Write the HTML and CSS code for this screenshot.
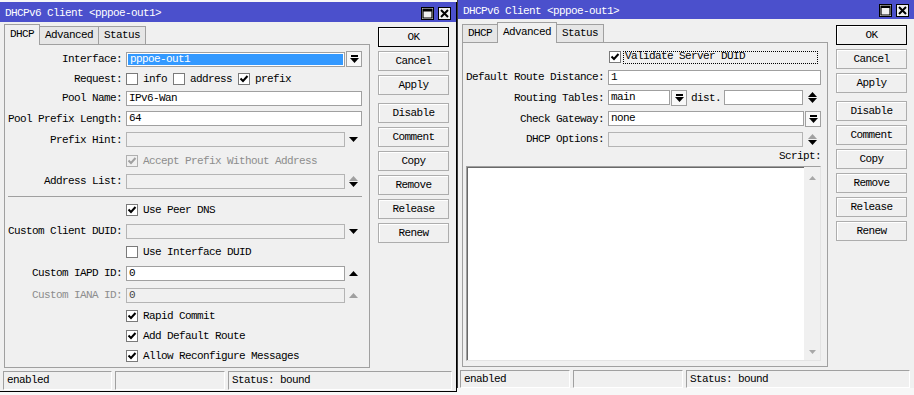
FILE: index.html
```html
<!doctype html>
<html lang="en">

<head>
    <meta charset="utf-8">
    <title>DHCPv6 Client &lt;pppoe-out1&gt;</title>
    <link rel="stylesheet" href="styles.css">
</head>

<body>
    <div class="desk">
        <!-- DHCP tab window -->
        <section class="win win-left">
            <header class="titlebar">
                <span class="title">DHCPv6 Client &lt;pppoe-out1&gt;</span>
                <span class="tb-btns">
                    <span class="tb-btn"><svg width="11" height="11" viewBox="0 0 11 11"><path d="M1 1h9v9H1z M1 1h9v2H1z" fill="none" stroke="#000" stroke-width="1.2"/><rect x="1" y="1" width="9" height="2"/></svg></span>
                    <span class="tb-btn"><svg width="11" height="11" viewBox="0 0 11 11"><path d="M2 2l7 7M9 2l-7 7" stroke="#000" stroke-width="2"/></svg></span>
                </span>
            </header>
            <div class="win-body">
                <div class="main">
                    <div class="tabs">
                        <span class="tab active">DHCP</span>
                        <span class="tab">Advanced</span>
                        <span class="tab">Status</span>
                    </div>
                    <div class="panel panel-left">
                        <div class="row h20">
                            <span class="lbl">Interface:</span>
                            <div class="ctl"><span class="field sel"><span>pppoe-out1</span></span><span class="ddbtn"><svg width="9" height="8" viewBox="0 0 9 8"><rect x="1" y="0" width="7" height="2"/><path d="M0 3h9l-4.5 5z"/></svg></span></div>
                        </div>
                        <div class="row h19">
                            <span class="lbl">Request:</span>
                            <div class="ctl">
                                <span class="cb"></span><span>info</span>
                                <span class="cb ml6"></span><span>address</span>
                                <span class="cb ml6"><svg width="10" height="10" viewBox="0 0 10 10"><path d="M1.5 4.5l2.5 2.5 4.5-5" fill="none" stroke="#000" stroke-width="2"/></svg></span><span>prefix</span>
                            </div>
                        </div>
                        <div class="row h20">
                            <span class="lbl">Pool Name:</span>
                            <div class="ctl"><span class="field">IPv6-Wan</span></div>
                        </div>
                        <div class="row h21">
                            <span class="lbl">Pool Prefix Length:</span>
                            <div class="ctl"><span class="field">64</span></div>
                        </div>
                        <div class="row h21">
                            <span class="lbl">Prefix Hint:</span>
                            <div class="ctl"><span class="field dis"></span><span class="arrow"><svg width="9" height="5" viewBox="0 0 9 5"><path d="M0 0h9L4.5 5z"/></svg></span></div>
                        </div>
                        <div class="row h21">
                            <span class="lbl"></span>
                            <div class="ctl"><span class="cb dis"><svg width="10" height="10" viewBox="0 0 10 10"><path d="M1.5 4.5l2.5 2.5 4.5-5" fill="none" stroke="#a0a0a0" stroke-width="2"/></svg></span><span class="gray">Accept Prefix Without Address</span></div>
                        </div>
                        <div class="row h20">
                            <span class="lbl">Address List:</span>
                            <div class="ctl"><span class="field dis"></span><span class="arrow updown"><svg width="9" height="5" viewBox="0 0 9 5"><path d="M0 5h9L4.5 0z" fill="#a0a0a0"/></svg><svg width="9" height="5" viewBox="0 0 9 5"><path d="M0 0h9L4.5 5z"/></svg></span></div>
                        </div>
                        <div class="sep"></div>
                        <div class="row h20">
                            <span class="lbl"></span>
                            <div class="ctl"><span class="cb"><svg width="10" height="10" viewBox="0 0 10 10"><path d="M1.5 4.5l2.5 2.5 4.5-5" fill="none" stroke="#000" stroke-width="2"/></svg></span><span>Use Peer DNS</span></div>
                        </div>
                        <div class="row h22">
                            <span class="lbl">Custom Client DUID:</span>
                            <div class="ctl"><span class="field dis"></span><span class="arrow"><svg width="9" height="5" viewBox="0 0 9 5"><path d="M0 0h9L4.5 5z"/></svg></span></div>
                        </div>
                        <div class="row h20">
                            <span class="lbl"></span>
                            <div class="ctl"><span class="cb"></span><span>Use Interface DUID</span></div>
                        </div>
                        <div class="row h22">
                            <span class="lbl">Custom IAPD ID:</span>
                            <div class="ctl"><span class="field">0</span><span class="arrow"><svg width="9" height="5" viewBox="0 0 9 5"><path d="M0 5h9L4.5 0z"/></svg></span></div>
                        </div>
                        <div class="row h22">
                            <span class="lbl gray">Custom IANA ID:</span>
                            <div class="ctl"><span class="field dis">0</span><span class="arrow"><svg width="9" height="5" viewBox="0 0 9 5"><path d="M0 5h9L4.5 0z" fill="#a0a0a0"/></svg></span></div>
                        </div>
                        <div class="row h20">
                            <span class="lbl"></span>
                            <div class="ctl"><span class="cb"><svg width="10" height="10" viewBox="0 0 10 10"><path d="M1.5 4.5l2.5 2.5 4.5-5" fill="none" stroke="#000" stroke-width="2"/></svg></span><span>Rapid Commit</span></div>
                        </div>
                        <div class="row h20">
                            <span class="lbl"></span>
                            <div class="ctl"><span class="cb"><svg width="10" height="10" viewBox="0 0 10 10"><path d="M1.5 4.5l2.5 2.5 4.5-5" fill="none" stroke="#000" stroke-width="2"/></svg></span><span>Add Default Route</span></div>
                        </div>
                        <div class="row h20">
                            <span class="lbl"></span>
                            <div class="ctl"><span class="cb"><svg width="10" height="10" viewBox="0 0 10 10"><path d="M1.5 4.5l2.5 2.5 4.5-5" fill="none" stroke="#000" stroke-width="2"/></svg></span><span>Allow Reconfigure Messages</span></div>
                        </div>
                    </div>
                </div>
                <div class="buttons">
                    <span class="btn default">OK</span>
                    <span class="btn">Cancel</span>
                    <span class="btn">Apply</span>
                    <span class="btn gap">Disable</span>
                    <span class="btn">Comment</span>
                    <span class="btn">Copy</span>
                    <span class="btn">Remove</span>
                    <span class="btn">Release</span>
                    <span class="btn">Renew</span>
                </div>
            </div>
            <div class="statusbar">
                <span class="sb-cell">enabled</span>
                <span class="sb-cell"></span>
                <span class="sb-cell">Status: bound</span>
            </div>
        </section>

        <!-- Advanced tab window -->
        <section class="win win-right">
            <header class="titlebar">
                <span class="title">DHCPv6 Client &lt;pppoe-out1&gt;</span>
                <span class="tb-btns">
                    <span class="tb-btn"><svg width="11" height="11" viewBox="0 0 11 11"><path d="M1 1h9v9H1z" fill="none" stroke="#000" stroke-width="1.2"/><rect x="1" y="1" width="9" height="2"/></svg></span>
                    <span class="tb-btn"><svg width="11" height="11" viewBox="0 0 11 11"><path d="M2 2l7 7M9 2l-7 7" stroke="#000" stroke-width="2"/></svg></span>
                </span>
            </header>
            <div class="win-body">
                <div class="main">
                    <div class="tabs">
                        <span class="tab">DHCP</span>
                        <span class="tab active">Advanced</span>
                        <span class="tab">Status</span>
                    </div>
                    <div class="panel panel-right">
                        <div class="row h20">
                            <span class="lbl"></span>
                            <div class="ctl"><span class="cb ml1"><svg width="10" height="10" viewBox="0 0 10 10"><path d="M1.5 4.5l2.5 2.5 4.5-5" fill="none" stroke="#000" stroke-width="2"/></svg></span><span class="focus">Validate Server DUID</span></div>
                        </div>
                        <div class="row h20">
                            <span class="lbl">Default Route Distance:</span>
                            <div class="ctl"><span class="field">1</span></div>
                        </div>
                        <div class="row h21">
                            <span class="lbl">Routing Tables:</span>
                            <div class="ctl">
                                <span class="field rt-main">main</span><span class="ddbtn"><svg width="9" height="8" viewBox="0 0 9 8"><rect x="1" y="0" width="7" height="2"/><path d="M0 3h9l-4.5 5z"/></svg></span>
                                <span class="dist">dist.</span><span class="field rt-dist"></span>
                                <span class="arrow updown wide"><svg width="9" height="5" viewBox="0 0 9 5"><path d="M0 5h9L4.5 0z"/></svg><svg width="9" height="5" viewBox="0 0 9 5"><path d="M0 0h9L4.5 5z"/></svg></span>
                            </div>
                        </div>
                        <div class="row h21">
                            <span class="lbl">Check Gateway:</span>
                            <div class="ctl"><span class="field">none</span><span class="ddbtn"><svg width="9" height="8" viewBox="0 0 9 8"><rect x="1" y="0" width="7" height="2"/><path d="M0 3h9l-4.5 5z"/></svg></span></div>
                        </div>
                        <div class="row h20">
                            <span class="lbl">DHCP Options:</span>
                            <div class="ctl"><span class="field dis"></span><span class="arrow updown wide"><svg width="9" height="5" viewBox="0 0 9 5"><path d="M0 5h9L4.5 0z" fill="#a0a0a0"/></svg><svg width="9" height="5" viewBox="0 0 9 5"><path d="M0 0h9L4.5 5z"/></svg></span></div>
                        </div>
                        <div class="script-lbl">Script:</div>
                        <div class="script">
                            <div class="vscroll">
                                <svg width="7" height="4" viewBox="0 0 7 4"><path d="M0 4h7L3.5 0z"/></svg>
                                <svg width="7" height="4" viewBox="0 0 7 4"><path d="M0 0h7L3.5 4z"/></svg>
                            </div>
                        </div>
                    </div>
                </div>
                <div class="buttons">
                    <span class="btn default">OK</span>
                    <span class="btn">Cancel</span>
                    <span class="btn">Apply</span>
                    <span class="btn gap">Disable</span>
                    <span class="btn">Comment</span>
                    <span class="btn">Copy</span>
                    <span class="btn">Remove</span>
                    <span class="btn">Release</span>
                    <span class="btn">Renew</span>
                </div>
            </div>
            <div class="statusbar">
                <span class="sb-cell">enabled</span>
                <span class="sb-cell"></span>
                <span class="sb-cell">Status: bound</span>
            </div>
        </section>
    </div>
</body>

</html>
```

FILE: styles.css
```css
body {
    margin: 0;
    background: #fff;
    color: #000;
    font-family: "Liberation Mono", "DejaVu Sans Mono", monospace;
    font-size: 11px;
    letter-spacing: -0.6px;
}

.desk {
    display: flex;
    align-items: flex-start;
    width: 914px;
    height: 395px;
    overflow: hidden;
    background: #f7f7f7;
}

.win {
    width: 457px;
    box-sizing: border-box;
    background: #f0f0f0;
    display: flex;
    flex-direction: column;
}

.win-left {
    margin-top: 2px;
    border-right: 1px solid #000;
    border-bottom: 1px solid #000;
    padding-bottom: 1px;
}

.win-right {
    border-left: 1px solid #3a3a3a;
}

.titlebar {
    display: flex;
    align-items: center;
    justify-content: space-between;
    height: 20px;
    box-sizing: border-box;
    padding: 2px 5px 0 5px;
    background: #4b50cc;
    color: #fff;
}

.win-right .titlebar {
    height: 19px;
}

.tb-btns {
    display: flex;
    gap: 4px;
}

.tb-btn {
    width: 13px;
    height: 13px;
    box-sizing: border-box;
    border: 1px solid #000;
    background: #f0f0f0;
    display: flex;
    align-items: center;
    justify-content: center;
}

.win-body {
    display: flex;
    gap: 8px;
    padding: 0 7px 0 4px;
    margin-top: 2px;
}

.win-right .win-body {
    margin-top: 3px;
}

.main {
    width: 366px;
    flex: none;
}

.tabs {
    display: flex;
    align-items: flex-end;
    height: 20px;
}

.tab {
    height: 18px;
    box-sizing: border-box;
    padding: 0 5px;
    line-height: 17px;
    border: 1px solid #a0a0a0;
    border-bottom: none;
    background: #e6e6e6;
    margin-left: -1px;
}

.tab:first-child {
    margin-left: 0;
}

.tab.active {
    position: relative;
    z-index: 1;
    height: 21px;
    margin-bottom: -1px;
    line-height: 19px;
    background: #f0f0f0;
    border-color: #a0a0a0;
}

.panel {
    box-sizing: border-box;
    border: 1px solid #a0a0a0;
    padding-top: 4px;
}

.panel-left {
    height: 324px;
}

.panel-right {
    height: 325px;
}

.row {
    display: grid;
    grid-template-columns: 117px 1fr;
    column-gap: 4px;
    align-items: center;
}

.panel-right .row {
    grid-template-columns: 141px 1fr;
}

.h19 { height: 19px; }
.h20 { height: 20px; }
.h21 { height: 21px; }
.h22 { height: 22px; }

.lbl {
    text-align: right;
    white-space: nowrap;
}

.gray {
    color: #8d8d8d;
}

.ctl {
    display: flex;
    align-items: center;
    padding-right: 7px;
    white-space: nowrap;
}

.panel-right .ctl {
    padding-right: 6px;
}

.field {
    flex: 1;
    height: 15px;
    box-sizing: border-box;
    border: 1px solid #a0a0a0;
    background: #fff;
    padding-left: 2px;
    line-height: 13px;
    overflow: hidden;
}

.field.dis {
    background: #f0f0f0;
    border-color: #b4b4b4;
    color: #444;
}

.field.sel {
    padding: 1px;
}

.field.sel span {
    display: block;
    height: 11px;
    line-height: 11px;
    padding-left: 2px;
    background: #3399ff;
    color: #fff;
}

.ddbtn {
    width: 16px;
    height: 16px;
    box-sizing: border-box;
    margin-left: 1px;
    border: 1px solid #a0a0a0;
    background: #f8f8f8;
    display: flex;
    align-items: center;
    justify-content: center;
}

.arrow {
    width: 17px;
    display: flex;
    justify-content: center;
}

.arrow.wide {
    width: 18px;
}

.updown {
    flex-direction: column;
    align-items: center;
    gap: 1px;
}

.rt-main {
    flex: none;
    width: 62px;
}

.rt-dist {
    flex: none;
    width: 79px;
}

.dist {
    margin: 0 3px 0 4px;
}

.cb {
    width: 12px;
    height: 12px;
    box-sizing: border-box;
    border: 1px solid #7a7a7a;
    background: #fff;
    margin-right: 5px;
    display: flex;
    align-items: center;
    justify-content: center;
    flex: none;
}

.cb.dis {
    background: #f0f0f0;
    border-color: #b0b0b0;
}

.ml6 {
    margin-left: 6px;
}

.ml1 {
    margin-left: 1px;
    margin-right: 2px;
}

.focus {
    flex: 1;
    height: 11px;
    line-height: 9px;
    border: 1px dotted #000;
    padding-left: 1px;
    margin-right: 3px;
}

.sep {
    height: 1px;
    background: #a0a0a0;
    margin: 5px 7px 3px 3px;
}

.script-lbl {
    height: 15px;
    line-height: 15px;
    text-align: right;
    padding-right: 6px;
}

.script {
    height: 195px;
    box-sizing: border-box;
    margin: 2px 6px 0 3px;
    border: 1px solid #a0a0a0;
    border-right-color: #e3e3e3;
    border-bottom-color: #e3e3e3;
    box-shadow: inset 1px 1px #696969;
    background: #fff;
    display: flex;
    justify-content: flex-end;
}

.vscroll {
    width: 16px;
    background: #f0f0f0;
    display: flex;
    flex-direction: column;
    align-items: center;
    justify-content: space-between;
    padding: 9px 0 6px 0;
    fill: #a8a8a8;
}

.buttons {
    width: 71px;
    padding-top: 3px;
    display: flex;
    flex-direction: column;
    gap: 4px;
}

.btn {
    height: 20px;
    box-sizing: border-box;
    border: 1px solid #adadad;
    box-shadow: inset 1px 1px #fff;
    background: #f0f0f0;
    text-align: center;
    line-height: 18px;
}

.btn.default {
    border-color: #000;
}

.btn.gap {
    margin-top: 4px;
}

.statusbar {
    display: grid;
    grid-template-columns: 110px 110px 1fr;
    gap: 3px;
    margin-top: 3px;
    padding: 0 4px 0 3px;
}

.win-left .statusbar {
    grid-template-columns: 109px 110px 1fr;
}

.win-right .statusbar {
    padding-left: 2px;
}

.sb-cell {
    height: 19px;
    box-sizing: border-box;
    border: 1px solid;
    border-color: #a0a0a0 #fff #fff #a0a0a0;
    padding-left: 3px;
    line-height: 17px;
}

.win-right .sb-cell {
    height: 18px;
    line-height: 16px;
}
```
